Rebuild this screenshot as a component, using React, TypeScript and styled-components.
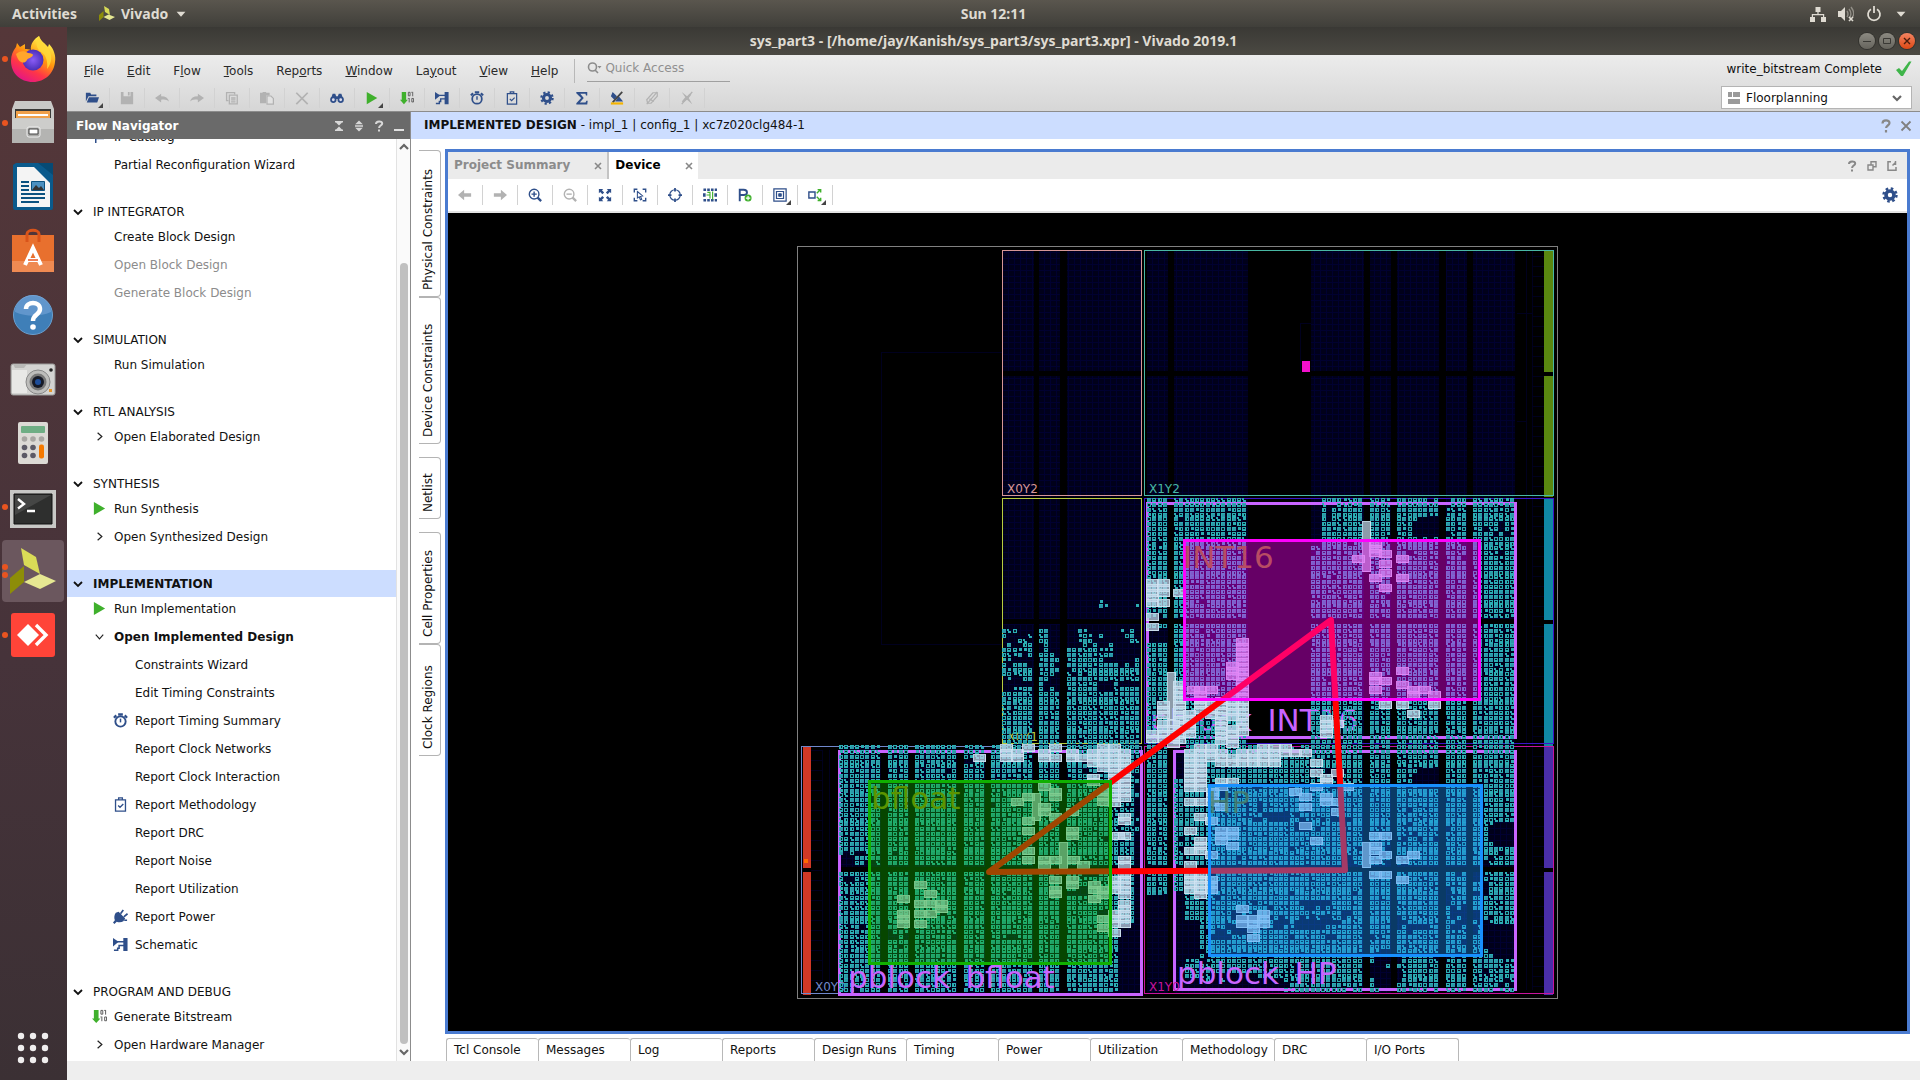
import React from "react";
import styled, { createGlobalStyle, css } from "styled-components";

const NAVY = "#2f4f8a";
const GREY = "#b2b2b2";
const GREEN = "#3fb02c";

const Global = createGlobalStyle`
  *, *::before, *::after { box-sizing: border-box; }
  body {
    margin: 0;
    font-family: "DejaVu Sans", sans-serif;
    font-size: 12px;
    line-height: 16px;
    color: #111;
    background: #eee;
  }
  button, input, select { font: inherit; color: inherit; }
  button { border: 0; padding: 0; background: none; cursor: default; }
  svg { display: block; flex: none; }
`;

/* ---------- shell ---------- */

const Desktop = styled.div`
  height: 100vh;
  display: flex;
  flex-direction: column;
  overflow: hidden;
`;

const TopBar = styled.header`
  flex: none;
  height: 27px;
  padding: 0 12px;
  display: grid;
  grid-template-columns: 67px 1fr auto 1fr;
  align-items: center;
  background: linear-gradient(#5a564e, #403f3a);
  color: #dfdbd2;
  font-family: "Noto Sans", sans-serif;
  font-size: 14px;
  font-weight: 700;
`;

const TopGroup = styled.div<{ $end?: boolean; $gap: number }>`
  display: flex;
  align-items: center;
  grid-column: ${(p) => (p.$end ? "4" : "1 / 3")};
  justify-content: ${(p) => (p.$end ? "flex-end" : "flex-start")};
  gap: ${(p) => p.$gap}px;
`;

const TopButton = styled.button`
  display: flex;
  align-items: center;
  gap: 6px;
  font-weight: 700;
`;

const Below = styled.div`
  flex: 1;
  min-height: 0;
  display: flex;
`;

const Dock = styled.nav`
  width: 67px;
  flex: none;
  display: flex;
  flex-direction: column;
  background: linear-gradient(#553739, #46333a 60%, #3b3034);
`;

const DockItem = styled.button<{ $last?: boolean }>`
  height: 64px;
  padding-left: 2px;
  display: flex;
  align-items: center;
  ${(p) => p.$last && css`margin-top: auto;`}
`;

const DockTile = styled.span<{ $active?: boolean }>`
  width: 62px;
  height: 62px;
  border-radius: 4px;
  display: grid;
  grid-template-columns: 6px 50px;
  align-items: center;
  background: ${(p) => (p.$active ? "#6b575e" : "transparent")};
`;

const Dots = styled.span`
  display: flex;
  flex-direction: column;
  gap: 2px;
`;

const Dot = styled.i`
  width: 6px;
  height: 6px;
  border-radius: 50%;
  background: #e95420;
`;

const Window = styled.div`
  flex: 1;
  min-width: 0;
  display: flex;
  flex-direction: column;
  background: #fff;
`;

const TitleBar = styled.div`
  flex: none;
  height: 28px;
  padding: 0 5px;
  display: grid;
  grid-template-columns: 1fr auto 1fr;
  align-items: center;
  background: linear-gradient(#3a3935, #4b4943);
  color: #dfdbd2;
`;

const Title = styled.h1`
  grid-column: 2;
  margin: 0;
  font-family: "Noto Sans", sans-serif;
  font-size: 14px;
  font-weight: 700;
  white-space: nowrap;
`;

const WindowButtons = styled.div`
  display: flex;
  justify-content: flex-end;
  gap: 4px;
`;

const RoundButton = styled.button<{ $close?: boolean }>`
  width: 16px;
  height: 16px;
  border-radius: 50%;
  display: grid;
  place-items: center;
  box-shadow: 0 0 0 1px #33322e;
  background: ${(p) => (p.$close ? "linear-gradient(#f48462, #dd4814)" : "linear-gradient(#8c8a82, #66645d)")};
`;

/* ---------- menu and toolbar ---------- */

const Chrome = styled.div`
  flex: none;
  display: flex;
  justify-content: space-between;
  height: 57px;
  padding-right: 8px;
  border-bottom: 1px solid #8c8c8c;
  background: linear-gradient(#ececec, #d6d6d6);
`;

const MenuRow = styled.div`
  display: flex;
  align-items: center;
  height: 31px;
  padding-left: 6px;
`;

const MenuButton = styled.button`
  padding: 0 12px 0 11px;
  color: #2a2a2a;
`;

const QuickAccess = styled.label`
  display: flex;
  align-items: center;
  width: 156px;
  height: 24px;
  margin-left: 4px;
  padding-left: 12px;
  border-left: 1px solid #b8b8b8;
`;

const QuickField = styled.span`
  display: flex;
  align-items: center;
  gap: 2px;
  width: 100%;
  height: 22px;
  padding-bottom: 4px;
  border-bottom: 1px solid #a0a0a0;
`;

const QuickInput = styled.input`
  width: 100%;
  min-width: 0;
  border: 0;
  padding: 0;
  outline: 0;
  background: transparent;
  &::placeholder { color: #909090; opacity: 1; }
`;

const ToolRow = styled.div`
  display: flex;
  align-items: center;
  height: 24px;
  padding-left: 8px;
`;

const ToolButton = styled.button<{ $line: string }>`
  position: relative;
  width: 35px;
  height: 20px;
  display: grid;
  place-items: center;
  border-right: 1px solid ${(p) => p.$line};
`;

const Corner = styled.i`
  position: absolute;
  right: 6px;
  bottom: 0;
  border-left: 5px solid transparent;
  border-bottom: 5px solid #444;
`;

const StatusArea = styled.div`
  display: flex;
  flex-direction: column;
  align-items: flex-end;
  padding-top: 5px;
  gap: 8px;
`;

const RunStatus = styled.div`
  display: flex;
  align-items: center;
  gap: 14px;
  height: 18px;
`;

const LayoutBox = styled.label`
  display: flex;
  align-items: center;
  width: 191px;
  height: 23px;
  padding: 0 6px 0 4px;
  gap: 4px;
  border: 1px solid #b4b4b4;
  background: #fff;
`;

const LayoutSelect = styled.select`
  flex: 1;
  appearance: none;
  border: 0;
  padding: 0;
  background: transparent;
  outline: 0;
`;

/* ---------- flow navigator ---------- */

const Work = styled.div`
  flex: 1;
  min-height: 0;
  display: flex;
`;

const Navigator = styled.aside`
  width: 344px;
  flex: none;
  display: flex;
  flex-direction: column;
  border-right: 1px solid #8c8c8c;
`;

const NavHeader = styled.div`
  flex: none;
  height: 27px;
  padding: 0 3px 0 9px;
  display: flex;
  align-items: center;
  gap: 4px;
  background: #6a6a6a;
  color: #fff;
`;

const NavTitle = styled.h2`
  flex: 1;
  margin: 0;
  font-size: 12px;
  font-weight: 700;
`;

const NavBody = styled.div`
  flex: 1;
  min-height: 0;
  display: flex;
`;

const NavTree = styled.div`
  flex: 1;
  min-width: 0;
  overflow: hidden;
  display: flex;
  flex-direction: column;
  justify-content: flex-end;
  gap: 22px;
  padding-bottom: 5px;
`;

const Section = styled.section`
  flex: none;
`;

const SectionHead = styled.button<{ $active?: boolean }>`
  width: 100%;
  height: 27px;
  margin-bottom: 1px;
  padding-left: 3px;
  display: flex;
  align-items: center;
  gap: 7px;
  background: ${(p) => (p.$active ? "#ccddff" : "transparent")};
  font-weight: ${(p) => (p.$active ? 700 : 400)};
`;

const ItemList = styled.div`
  display: flex;
  flex-direction: column;
  gap: 6px;
`;

const Item = styled.button<{ $deep?: boolean; $muted?: boolean; $bold?: boolean }>`
  height: 22px;
  padding-left: ${(p) => (p.$deep ? 46 : 25)}px;
  display: flex;
  align-items: center;
  gap: 6px;
  color: ${(p) => (p.$muted ? "#8c8c8c" : "#111")};
  font-weight: ${(p) => (p.$bold ? 700 : 400)};
  white-space: nowrap;
`;

const IconSlot = styled.span`
  width: 16px;
  height: 16px;
  flex: none;
`;

const ScrollBar = styled.div`
  width: 14px;
  flex: none;
  display: flex;
  flex-direction: column;
  align-items: center;
  padding: 0 0 1px;
  border-left: 1px solid #e2e2e2;
  background: #fafafa;
`;

const ScrollSpace = styled.div`
  flex: 108;
`;

const ScrollThumb = styled.div`
  flex: 780;
  width: 8px;
  border-radius: 4px;
  background: #c0c0c0;
`;

/* ---------- design area ---------- */

const Design = styled.main`
  flex: 1;
  min-width: 0;
  display: flex;
  flex-direction: column;
`;

const DesignHeader = styled.div`
  flex: none;
  height: 27px;
  padding: 0 6px 0 13px;
  display: flex;
  align-items: center;
  gap: 4px;
  background: #ccddff;
`;

const DesignTitle = styled.h2`
  flex: 1;
  margin: 0;
  padding-bottom: 2px;
  font-size: 12px;
  font-weight: 400;
`;

const DesignBody = styled.div`
  flex: 1;
  min-height: 0;
  display: flex;
  padding: 10px 10px 0 8px;
`;

const SideTabs = styled.div`
  width: 22px;
  flex: none;
  display: flex;
  flex-direction: column;
  gap: 13px;
  padding-top: 1px;
`;

const SideGroup = styled.div<{ $row: number }>`
  display: grid;
  grid-auto-rows: ${(p) => p.$row}px;
`;

const SideTab = styled.button`
  writing-mode: vertical-rl;
  transform: rotate(180deg);
  width: 22px;
  padding: 6px 0 0 3px;
  text-align: left;
  border: 1px solid #b4b4b4;
  border-right: 0;
  border-radius: 4px 0 0 4px;
  white-space: nowrap;
`;

const PanelColumn = styled.div`
  flex: 1;
  min-width: 0;
  display: flex;
  flex-direction: column;
  gap: 4px;
  padding-left: 4px;
`;

const Panel = styled.section`
  flex: 1;
  min-height: 0;
  display: flex;
  flex-direction: column;
  border: 3px solid #4a7bd0;
`;

const TabStrip = styled.div`
  flex: none;
  height: 27px;
  padding-right: 7px;
  display: flex;
  background: #ebebeb;
`;

const Tab = styled.button<{ $active?: boolean }>`
  display: flex;
  align-items: center;
  gap: 20px;
  padding: 0 1px 2px 6px;
  font-weight: 700;
  color: ${(p) => (p.$active ? "#000" : "#8c8c8c")};
  background: ${(p) => (p.$active ? "#fff" : "transparent")};
  border-right: ${(p) => (p.$active ? "0" : "2px solid #c4c4c4")};
`;

const StripTools = styled.div`
  margin-left: auto;
  display: flex;
  align-items: center;
  gap: 4px;
`;

const ViewTools = styled.div`
  flex: none;
  height: 34px;
  display: flex;
  align-items: center;
  padding-right: 9px;
  border-bottom: 2px solid #e4e4e4;
`;

const Push = styled.div`
  display: flex;
  margin-left: auto;
`;

const Canvas = styled.div`
  flex: 1;
  min-height: 0;
  background: #000;
  svg { width: 100%; height: 100%; }
`;

const BottomTabs = styled.div`
  flex: none;
  display: flex;
  height: 23px;
  padding-left: 1px;
`;

const BottomTab = styled.button`
  width: 92px;
  padding-left: 7px;
  text-align: left;
  white-space: nowrap;
  border: 1px solid #b8b8b8;
  border-width: 1px 0 0 1px;
  border-radius: 3px 3px 0 0;
  &:last-child { width: 93px; border-right-width: 1px; }
`;

const StatusBar = styled.footer`
  flex: none;
  height: 19px;
  background: #eee;
`;

/* ---------- icons ---------- */

const icons: Record<string, React.ReactNode> = {
  open: <path fill={NAVY} d="M1 2h5l1 2h6v2H4L1 12zM4.500 7H16l-2 6H2z" />,
  save: <path fill={GREY} d="M1 1h3v5h8V1h3v14H1zM9 1h2v4H9z" />,
  undo: <path fill={GREY} d="M7 3v3c5 0 8 2 9 6-2-2-5-3-9-2v3L0 8z" />,
  redo: <path fill={GREY} d="M9 3v3C4 6 1 8 0 12c2-2 5-3 9-2v3l7-5z" />,
  copy: <g fill="none" stroke={GREY} strokeWidth="1.500"><path d="M4 11H1.800V1.800H11V4" /><path d="M5 4.800h9v10H5zM7 8h5M7 10.200h5M7 12.400h5" /></g>,
  paste: <g><path fill={GREY} d="M0 2h3V1h4v1h4v3H7v9H0z" /><path fill="#e2e2e2" stroke={GREY} strokeWidth="1.400" d="M8 5.700h4.500l2.800 2.800v6.500H8z" /></g>,
  cross: <path stroke={GREY} strokeWidth="2" d="M1.500 2l13 13M14.500 2l-13 13" />,
  find: <g fill={NAVY}><circle cx="3.800" cy="10" r="3.600" /><circle cx="12.200" cy="10" r="3.600" /><path d="M3 3h3l1 3h2l1-3h3l2 6H1z" /><circle cx="3.800" cy="10" r="1.600" fill="#dde" /><circle cx="12.200" cy="10" r="1.600" fill="#dde" /></g>,
  play: <path fill={GREEN} d="M2 1l12 7-12 7z" />,
  bits: <g><path fill={GREEN} d="M2 1h5v9h2l-4.500 5L0 10h2z" /><path fill="none" stroke="#555" d="M9.500 1.500h2v4h-2zM14.500 1v5M13 1.500h1M10.500 8v5M9 8.500h1M13.500 8.500h2v4h-2z" /></g>,
  schematic: <g><path fill={NAVY} d="M0 1l6 4v0l-6 5zM11 1h4.500v14H11z" /><path fill="none" stroke={NAVY} strokeWidth="1.600" d="M4 5h8M12 9H6.500v3H5v2.200H1" /></g>,
  clock: <g fill="none" stroke={NAVY}><circle cx="8" cy="9" r="5.500" strokeWidth="2" /><path strokeWidth="2.400" d="M5.500 1.500h5M1 5l2.500-2.500M15 5l-2.500-2.500" /><path strokeWidth="1.600" d="M8 6v4" /></g>,
  clip: <g fill="none" stroke={NAVY} strokeWidth="1.400"><path d="M2.700 3h10.600v12H2.700zM6 3V1h4v2M5.500 9l2 2 3.500-3.500" /></g>,
  gear: <g fill="none" stroke={NAVY}><circle cx="8" cy="8" r="4" strokeWidth="3.600" /><circle cx="8" cy="8" r="6.500" strokeWidth="2.400" strokeDasharray="2.550 2.550" /></g>,
  sigma: <path fill={NAVY} d="M1.500 1h12.500v4h-1.500L12 3H6l4 5-4.500 5.200H12l1-2.200h1.500L14 15.500H1.500v-1.500L7 8 1.500 2.500z" />,
  mark: <g><path fill={NAVY} d="M3 1l5 5-3 4-4-4zM10 6l5 6H6z" /><path stroke="#444" strokeWidth="2" d="M14 1L3 13" /><path fill="#f4b400" d="M1 13h14v2.500H1z" /></g>,
  unlink: <g fill="none" stroke={GREY} strokeWidth="1.400"><path d="M2 10l7-8h5v4l-7 8H3z" /><path d="M14 1L2 15M5 9l5 3" /></g>,
  unmark: <g><path fill={GREY} d="M2 1l6 5 3-3 2 1-3 4 4 7-6-5-4 3-2-1 4-5z" /><path stroke={GREY} strokeWidth="1.600" d="M14 1L2 15" /></g>,
  plug: <g><path fill={NAVY} d="M3 4l3-1 7 7-2 3c-2 1.500-5 1.500-7 .5L1.500 16 0 14.500 2 12C.8 9 1.500 6 3 4z" /><path stroke={NAVY} strokeWidth="1.800" d="M8 5l3-4M11.500 8.500L15.500 5M12 12h3" /></g>,
  catalog: <path fill="none" stroke={NAVY} strokeWidth="1.600" d="M4 1v14M4 4h8v6H4" />,
  left: <path fill={GREY} d="M7 2v4h8v4H7v4L0 8z" />,
  right: <path fill={GREY} d="M9 2v4H1v4h8v4l7-6z" />,
  zoomin: <g fill="none" stroke={NAVY}><circle cx="7" cy="7" r="5.500" strokeWidth="1.600" /><path strokeWidth="1.600" d="M4 7h6M7 4v6" /><path strokeWidth="2.600" d="M11 11l4 4" /></g>,
  zoomout: <g fill="none" stroke={GREY}><circle cx="7" cy="7" r="5.500" strokeWidth="1.600" /><path strokeWidth="1.600" d="M4 7h6" /><path strokeWidth="2.600" d="M11 11l4 4" /></g>,
  fit: <path fill={NAVY} d="M1 1h5L4.500 2.500 7 5 5 7 2.500 4.500 1 6zM15 1v5l-1.500-1.500L11 7 9 5l2.500-2.500L10 1zM1 15v-5l1.500 1.500L5 9l2 2-2.500 2.500L6 15zM15 15h-5l1.500-1.500L9 11l2-2 2.500 2.500L15 10z" />,
  select: <g fill="none" stroke={NAVY} strokeWidth="1.600"><path d="M1.500 5V1.500H5M11 1.500h3.500V5M14.500 11v3.500H11M5 14.500H1.500V11" /><path strokeWidth="1.200" d="M5 4l6 5-2.500.5L10 13l-1.500.5L7 10l-2 1.500z" /></g>,
  target: <g fill="none" stroke={NAVY} strokeWidth="1.400"><circle cx="8" cy="8" r="6" /><path strokeWidth="2" d="M8 0v4M8 12v4M0 8h4M12 8h4" /></g>,
  route: <g><path stroke={NAVY} strokeWidth="3" strokeDasharray="3 1.300" d="M0.500 2h16M0.500 14h16" /><path fill={NAVY} d="M0 6h3v4H0zM13 6h3v4h-3z" /><path fill="none" stroke={GREEN} strokeWidth="1.300" d="M5 5h3v3H4M8 8v4M11 4v9" /></g>,
  pblock: <g><path fill="none" stroke={NAVY} strokeWidth="2.200" d="M2 15V2h4.500c5 0 5 6 0 6H2" /><circle cx="11.500" cy="11.500" r="4" fill={GREEN} /><path stroke="#fff" strokeWidth="1.300" d="M9 11.500h5M11.500 9v5" /></g>,
  layers: <g fill="none" stroke={NAVY}><path strokeWidth="1.400" d="M1 1h14v14H1zM4 4h8v8H4z" /><path fill={NAVY} d="M6.500 6.500h3v3h-3z" /></g>,
  expand: <g fill="none"><path stroke={NAVY} strokeWidth="1.600" d="M1 4.500h7v7H1z" /><path stroke={GREEN} strokeWidth="1.600" d="M10 6l4-4M11 1.800h3.500V5M10 10l4 4M11 14.200h3.500V11" /></g>,
  check: <path fill="#3fb54a" d="M0 9l3-2 3 3 7-9.500h2.500L7 15H5z" />,
  layout: <path fill="#9a9a9a" d="M2 2h4v5H2zM7 2h7v5H7zM2 9h12v5H2z" />,
  chevron: <path fill="none" stroke="#666" strokeWidth="2.200" d="M4 6l4 4 4-4" />,
  chevUp: <path fill="none" stroke="#666" strokeWidth="2.200" d="M4 10l4-4 4 4" />,
  sectionChevron: <path fill="none" stroke="#111" strokeWidth="1.800" d="M4 6l4 4 4-4" />,
  openChevron: <path fill="none" stroke="#222" strokeWidth="1.200" d="M4 6l4 4.500L12 6" />,
  closedChevron: <path fill="none" stroke="#222" strokeWidth="1.300" d="M6 4l4.500 4L6 12" />,
  search: <g fill="none" stroke="#8c8c8c" strokeWidth="1.600"><circle cx="5.500" cy="7" r="4" /><path d="M8 10l3 3" /><path fill="#8c8c8c" stroke="none" d="M10.500 6h4l-2 2.500z" /></g>,
  collapse: <g fill="#d8d8d8"><path d="M4 3h8v1.500H4zM8 7.500L5 4.500h6zM8 8.500l3 3H5zM4 11.500h8V13H4z" /></g>,
  updown: <path fill="#d8d8d8" d="M8 2.500l3.800 3.800H4.200zM8 13.500L4.200 9.700h7.600zM4 7.200h8v1.600H4z" />,
  helpLight: <path fill="none" stroke="#d8d8d8" strokeWidth="2" d="M5 6c0-3.300 6.200-3.300 6.200-.5 0 2-3.100 2.200-3.100 4.500M8 11.500v2" />,
  help: <path fill="none" stroke="#888" strokeWidth="2" d="M5 6c0-3.300 6.200-3.300 6.200-.5 0 2-3.100 2.200-3.100 4.500M8 11.500v2" />,
  helpLarge: <path fill="none" stroke="#888" strokeWidth="2.200" d="M4.500 5.500c0-4 7-4 7-.5 0 2.500-3.400 2.500-3.400 5M8 12v2.400" />,
  minimize: <path fill="#e0e0e0" d="M3 11h10v2H3z" />,
  close: <path stroke="#808080" strokeWidth="1.800" d="M3.500 3.500l9 9M12.500 3.500l-9 9" />,
  closeSmall: <path stroke="#888" strokeWidth="1.600" d="M5 6l6 6M11 6l-6 6" />,
  restore: <path fill="none" stroke="#888" strokeWidth="1.400" d="M7 7V3.700h5v5H9M4 7h5v5H4z" />,
  popout: <path fill="none" stroke="#888" strokeWidth="1.500" d="M7 3.700H4v8.500h8V9M8.500 7.500l3-3M11.500 3v4" />,
  network: <g fill="#dfdbd2"><path d="M5.500 1h5v5h-5zM0 11h5v5H0zM11 11h5v5h-5z" /><path d="M7.400 6h1.200v2h5.600v3H13V9.200H3V11H1.800V8h5.600z" /></g>,
  sound: <g><path fill="#dfdbd2" d="M0 5h3l4-4v14l-4-4H0z" /><path fill="none" stroke="#918e86" strokeWidth="1.400" d="M9 5c1.300 2 1.300 4 0 6M11 3c2.500 3 2.500 7 0 9M13 1c3 4 3 8 1.500 10" /><path stroke="#dfdbd2" strokeWidth="1.600" d="M11 11l4 4M15 11l-4 4" /></g>,
  power: <path fill="none" stroke="#dfdbd2" strokeWidth="1.800" d="M5 3.200a6 6 0 1 0 6 0M8 0v7" />,
  caret: <path fill="#dfdbd2" d="M3 5.500h10L8 11z" />,
  vivado: <g><path fill="#d9dc57" d="M5 0l5 3 1 6-5-3z" /><path fill="#8d8d08" d="M0 9l4.500-4v6L0 15z" /><path fill="#e6e892" d="M4.500 11l5-2.500L16 11l-5.500 3z" /></g>,
};

const Icon = ({ name, size = 16 }: { name: string; size?: number }) => (
  <svg width={size} height={size} viewBox="0 0 16 16" aria-hidden="true">{icons[name]}</svg>
);

const Art = ({ children }: { children: React.ReactNode }) => (
  <svg width="50" height="50" viewBox="0 0 50 50" aria-hidden="true">{children}</svg>
);

const dockArt: { name: string; dots: number; active?: boolean; art: React.ReactNode }[] = [
  {
    name: "Firefox", dots: 1,
    art: (
      <Art>
        <defs>
          <linearGradient id="ffBody" x1="0.800" y1="0.100" x2="0.300" y2="1">
            <stop offset="0" stopColor="#fff44f" /><stop offset="0.400" stopColor="#ff980e" /><stop offset="0.700" stopColor="#ff3647" /><stop offset="1" stopColor="#e31587" />
          </linearGradient>
          <radialGradient id="ffGlobe"><stop offset="0" stopColor="#8a5cf6" /><stop offset="1" stopColor="#4a2fb8" /></radialGradient>
        </defs>
        <path fill="url(#ffBody)" d="M31 2c2 6 6 7 9 11l1-3c5 5 7 12 6 18-1 11-10 20-22 20C12 48 3 39 3 27c0-6 2-10 5-14l1-4 3 4 5-3v5c2 0 4 0 6 1-1-6 3-11 8-14z" />
        <circle cx="25" cy="26" r="10.500" fill="url(#ffGlobe)" />
        <path fill="#ffa62b" d="M8 20c3-3 8-4 12-1 3 0 5 1 5 2-1 3-5 3-6 5-2 4-6 2-6 2-2-1-4-4-5-8z" />
        <path fill="#ffd93a" d="M31 2c2 6 6 8 9 12 5 7 4 15-1 21 1-8-1-14-6-17-5-4-6-10-2-16z" opacity="0.850" />
      </Art>
    ),
  },
  {
    name: "Files", dots: 1,
    art: (
      <Art>
        <path fill="#c9c9c7" d="M7 3h36l3 8v34H4V11z" /><path fill="#3a3a38" d="M7 11h36v9H7z" />
        <path fill="#f0a04a" d="M8 13h34v7H8z" /><path fill="#fff" d="M10 16h30v2H10z" />
        <path fill="#b4b4b2" d="M4 21h42v24H4z" /><path fill="#cdcdcb" d="M4 21h42v10H4z" />
        <rect x="19" y="29" width="13" height="10" rx="2" fill="#a8a8a6" stroke="#efefef" /><path fill="#fff" stroke="#444" d="M21 31h9v5h-9z" />
      </Art>
    ),
  },
  {
    name: "LibreOffice Writer", dots: 0,
    art: (
      <Art>
        <path fill="#0a5a8c" d="M8 1h37v45a2 2 0 0 1-2 2H7a2 2 0 0 1-2-2V3z" /><path fill="#f4f4f4" d="M9 5h17l16 16v24H9z" />
        <path fill="#0a5a8c" d="M28 1h17v16z" /><path fill="#064a74" d="M30 1h15v12z" />
        <path stroke="#0b5280" strokeWidth="2" d="M13 20h8M13 24h8M13 28h8M13 32h24M13 36h24M13 40h18" />
        <path fill="#4b90c0" stroke="#0b5280" d="M23.500 19.500h13v9h-13z" /><path fill="#333" d="M24 28l4-5 3 3 2-2 3 4z" />
      </Art>
    ),
  },
  {
    name: "Ubuntu Software", dots: 0,
    art: (
      <Art>
        <path fill="#e8702e" d="M4 9h42v37H4z" /><path fill="#ef8a52" d="M4 35h42v11H4z" />
        <path fill="none" stroke="#d9541a" strokeWidth="3" d="M19 16V8c0-5 12-5 12 0v8" />
        <path fill="none" stroke="#fff" strokeWidth="4" d="M17 39l8-17 8 17M18 34h14" /><path stroke="#e95420" strokeWidth="1.500" d="M20 34h10" />
      </Art>
    ),
  },
  {
    name: "Help", dots: 0,
    art: (
      <Art>
        <circle cx="25" cy="25" r="19.500" fill="#3f7fb8" stroke="#6aa0d0" /><path fill="#78a5d8" fillOpacity="0.600" d="M7 22a18 17 0 0 1 36 0c-12 5-24 5-36 0z" />
        <path fill="none" stroke="#fff" strokeWidth="4.500" d="M18 19c0-8 14-8 14 0 0 6-7 5-7 12" /><circle cx="25" cy="37" r="2.800" fill="#fff" />
      </Art>
    ),
  },
  {
    name: "Camera", dots: 0,
    art: (
      <Art>
        <rect x="3" y="10" width="44" height="31" rx="2" fill="#d4d4d2" stroke="#9c9c9a" /><path fill="#b8b8b6" d="M5 10h14l-3 4H7z" />
        <path fill="#e8e8e6" d="M4 16h15v23H4z" /><circle cx="30" cy="28" r="12" fill="#bdbdbb" stroke="#888" /><circle cx="30" cy="28" r="8.500" fill="#777" />
        <circle cx="30" cy="28" r="6" fill="#161a26" /><circle cx="30" cy="28" r="3" fill="#1d4d9a" /><circle cx="43" cy="16" r="1.800" fill="#222" /><path fill="#e8962a" d="M41 35h3v3h-3z" />
      </Art>
    ),
  },
  {
    name: "Calculator", dots: 0,
    art: (
      <Art>
        <rect x="10" y="4" width="30" height="42" rx="2" fill="#dcdad5" /><rect x="13" y="8" width="24" height="7" rx="1" fill="#6fae84" />
        <g fill="#a8a6a2"><circle cx="16.500" cy="21" r="2.800" /><circle cx="25" cy="21" r="2.800" /><circle cx="33.500" cy="21" r="2.800" /></g>
        <g fill="#5c5a66"><circle cx="16.500" cy="29.500" r="2.800" /><circle cx="25" cy="29.500" r="2.800" /><circle cx="16.500" cy="37.500" r="2.800" /><circle cx="25" cy="37.500" r="2.800" /></g>
        <rect x="31" y="26.500" width="5" height="14" rx="2" fill="#f57900" />
      </Art>
    ),
  },
  {
    name: "Terminal", dots: 1,
    art: (
      <Art>
        <path fill="#c8c8c6" d="M2 8h46v38H2z" /><path fill="#2e2f2e" stroke="#111" d="M6 12h38v30H6z" /><path fill="#454645" d="M7 13h36L7 33z" />
        <path fill="none" stroke="#fff" strokeWidth="2.400" d="M10 17l6 5-6 4.500M19 29h8" />
      </Art>
    ),
  },
  {
    name: "Vivado", dots: 2, active: true,
    art: (
      <Art>
        <path fill="#d9dc57" d="M13 2l15 9 4 17-16-9z" /><path fill="#8d8d08" d="M2 32l14-12v16L2 48z" /><path fill="#e6e892" d="M16 36l16-8 16 7-16 8z" />
      </Art>
    ),
  },
  {
    name: "AnyDesk", dots: 1,
    art: (
      <Art>
        <rect x="3" y="3" width="44" height="44" rx="3" fill="#ff4438" /><path fill="#fff" d="M20 14l11 11-11 11L9 25z" />
        <path fill="none" stroke="#fff" strokeWidth="3.400" d="M28 15l10 10-10 10" />
      </Art>
    ),
  },
];

/* ---------- device view ---------- */

const hash = (a: number, b: number) => {
  let h = (a * 374761393 + b * 668265263) | 0;
  h = Math.imul(h ^ (h >>> 13), 1274126177);
  return ((h ^ (h >>> 16)) >>> 0) / 4294967295;
};

const noise = (x: number, y: number) => {
  const ix = Math.floor(x);
  const iy = Math.floor(y);
  const fx = x - ix;
  const fy = y - iy;
  const top = hash(ix, iy) * (1 - fx) + hash(ix + 1, iy) * fx;
  const low = hash(ix, iy + 1) * (1 - fx) + hash(ix + 1, iy + 1) * fx;
  return top * (1 - fy) + low * fy;
};

// [first x, column count] of each slice column group
type Group = [number, number];
const west: Group[] = [[1002, 6], [1039, 4], [1067, 14]];
const southWest: Group[] = [[839, 8], [888, 4], [915, 8], [964, 4], [991, 8], [1039, 4], [1067, 14]];
const east: Group[] = [[1147, 4], [1174, 14], [1311, 10], [1370, 4], [1397, 8], [1446, 4], [1473, 8]];
const southEast: Group[] = [[1147, 4], [1174, 36], [1370, 4], [1397, 8], [1446, 4], [1473, 8]];

const PITCH_X = 5.25;
const PITCH_Y = 4.84;

const blob = (x: number, y: number, cx: number, cy: number, rx: number, ry: number) =>
  ((x - cx) / rx) ** 2 + ((y - cy) / ry) ** 2 < 1;

// share of empty slices around a point, 0 = packed, 1 = empty
const emptiness = (zone: string, x: number, y: number) => {
  if (zone === "X0Y1") {
    if (y < 590) return 1;
    if (y < 625) return x > 1095 ? 0.74 : 1;
    if (y < 645) return (x < 1050 || x > 1067) ? 0.5 : 0.75;
    if (y < 690) return x > 1050 && x < 1067 ? 0.65 : 0.36;
    return 0.2;
  }
  if (zone === "X0Y0") {
    if (x > 1130) return y < 830 ? 0.55 : 1;
    if (x > 1115) return y > 920 ? 0.9 : 0.3;
    if (blob(x, y, 850, 862, 22, 16)) return 0.45;
    return 0.17;
  }
  if (zone === "X1Y1") {
    if (x > 1300 && x < 1320 && y < 545) return 1;
    if (blob(x, y, 1424, 526, 16, 12)) return 0.8;
    if (x < 1170 && y > 628 && y < 640) return 0.9;
    return 0.15;
  }
  if (x < 1170) return y > 892 ? 1 : 0.05;
  if (x < 1184) return y < 775 || y > 890 ? 1 : 0.2;
  if (x < 1200 && y > 918 && y < 955) return 1;
  if (blob(x, y, 1306, 912, 42, 14)) return 0.55;
  if (blob(x, y, 1300, 818, 48, 10)) return 0.5;
  if (blob(x, y, 1465, 905, 26, 40)) return 0.5;
  if (blob(x, y, 1504, 832, 18, 14)) return 0.85;
  if (blob(x, y, 1504, 938, 24, 18)) return 0.9;
  if (blob(x, y, 1232, 925, 30, 16)) return 0.45;
  if (blob(x, y, 1385, 968, 16, 22)) return 0.8;
  if (blob(x, y, 1228, 983, 60, 10)) return 0.8;
  if (blob(x, y, 1424, 776, 14, 12)) return 0.8;
  return 0.21;
};

const buildSlices = () => {
  let body = "";
  let shade = "";
  let hole = "";
  const fill = (zone: string, groups: Group[], top: number, middle: number) => {
    groups.forEach(([start, count]) => {
      for (let c = 0; c < count; c++) {
        for (let r = 0; r < 50; r++) {
          const x = Math.round(start + c * PITCH_X);
          const y = Math.round(r < 25 ? top + r * PITCH_Y : middle + (r - 25) * PITCH_Y);
          const e = emptiness(zone, x, y);
          if (e >= 1 || noise(x / 19, y / 11) * 0.7 + hash(x, y) * 0.3 < e) continue;
          const k = hash(y, x);
          if (k < 0.1) {
            body += `M${x + 1} ${y}h3v3h-3z`;
          } else if (k < 0.2) {
            body += `M${x} ${y}h2v2h2v2h-3v-2h-1z`;
          } else {
            body += `M${x} ${y}h4v4h-4z`;
            if (k < 0.4) hole += `M${x + 1} ${y + 1}h2v1h-2z`;
            else if (k < 0.55) hole += `M${x + 2} ${y + 1}h1v2h-1z`;
            else if (k < 0.65) hole += `M${x + 1} ${y + 1}h2v2h-2z`;
            else shade += `M${x + 1} ${y + 1}h3v3h-3z`;
          }
        }
      }
    });
  };
  fill("X0Y1", west, 498, 624);
  fill("X1Y1", east, 498, 624);
  fill("X0Y0", southWest, 745, 872);
  fill("X1Y0", southEast, 745, 872);
  return { body, shade, hole };
};

const slices = buildSlices();

// Highlighted tiles are listed in thirds of a unit, relative to the corner of their block.
type Tile = [number, number, number?, number?];
const stack = (x: number, from: number, to: number): Tile[] => {
  const out: Tile[] = [];
  for (let y = from; y <= to; y += 15) out.push([x, y]);
  return out;
};

const int16Tiles: Tile[] = [
  ...stack(48, 297, 370), ...stack(82, 297, 330), [82, 358], [48, 399], [48, 429], [130, 326],
  [697, 124, 28, 154], [667, 225], [718, 181], [718, 196], [718, 208], [748, 210], [748, 239], [748, 268], [718, 282], [748, 312], [799, 225], [799, 282],
  [718, 576], [718, 590], [748, 590], [718, 618], [799, 561], [799, 604], [832, 618], [832, 633], [864, 618], [895, 633], [895, 662], [748, 662], [799, 662], [832, 691],
  ...stack(319, 475, 755), ...stack(289, 546, 580), [112, 576, 26, 145], ...stack(130, 604, 780), ...stack(80, 662, 700), ...stack(80, 720, 765), ...stack(112, 720, 780),
  [170, 618], [193, 618], [226, 618], ...stack(193, 633, 690), ...stack(226, 662, 700), ...stack(256, 650, 780), ...stack(289, 640, 700), ...stack(289, 735, 780), [48, 750], [48, 765],
  ...stack(160, 690, 755), ...stack(570, 706, 765), [602, 720],
];

const hpTiles: Tile[] = [
  ...stack(163, 57, 175), ...stack(193, 43, 175), ...stack(226, 43, 80), ...stack(256, 57, 100), ...stack(289, 72, 100), ...stack(319, 57, 100),
  ...stack(350, 57, 90), ...stack(382, 43, 90), ...stack(415, 43, 90), ...stack(447, 43, 72), [478, 57], [508, 57], [541, 87], [541, 117], [570, 131], [570, 145], [602, 117],
  [256, 145], [289, 145], [256, 158], [228, 174], [228, 189], [163, 204], [193, 204], [228, 204], [256, 219], [193, 248], [226, 262], [163, 291], [193, 320], [193, 335], [163, 350], [193, 350], [226, 363],
  [163, 393], ...stack(163, 422, 468), ...stack(193, 422, 482), ...stack(226, 437, 468), [256, 291], [289, 291], [256, 306], [289, 306], [256, 320], [289, 335],
  [541, 158], [478, 174], [508, 189], [508, 219], [570, 189], [570, 204], [602, 204], [602, 233], [634, 158], [508, 276], [541, 320],
  [718, 306], [748, 306], [697, 337, 28, 78], [718, 335], [718, 350], [718, 378], [748, 363], [799, 378], [832, 363], [718, 423], [748, 423], [799, 438],
  [319, 525], [319, 555], [319, 570], [350, 555], [350, 570], [350, 585], [350, 612], [382, 540], [382, 555], [382, 570],
];

const bfloatTiles: Tile[] = [
  [550, 72], [631, 43], [631, 57], [631, 72], [663, 57], [663, 72], [697, 43], [745, 57], [745, 72], [778, 43], [778, 72], [829, 57], [829, 72], [855, 72],
  ...stack(891, 57, 90), ...stack(922, 43, 105), ...stack(955, 43, 220), [891, 131], [891, 145], ...stack(985, 57, 205), [922, 174], [922, 189], [922, 204], [985, 248], [985, 262], [966, 306], [985, 306],
  [985, 378], [985, 393], [745, 160], [778, 174], [778, 189], [697, 189], [663, 204], [727, 189, 28, 83], [745, 219], [745, 233], [778, 248], [697, 262], [697, 291], [829, 233], [829, 291], [829, 306],
  [697, 350], [697, 378], [808, 336, 28, 80], [745, 378], [745, 393], [778, 378], [832, 378], [862, 393], [778, 437], [829, 437], [829, 452], [778, 467], [778, 480],
  [893, 452], [893, 467], [893, 495], ...stack(922, 467, 495), ...stack(985, 422, 482), ...stack(955, 437, 470), [985, 510], [985, 525], ...stack(955, 540, 570), ...stack(985, 540, 570), [955, 597],
  [922, 555], [922, 582], [322, 495], [373, 452], [403, 480], [373, 510], [403, 510], [436, 510], [436, 525], [373, 540], [403, 540], [322, 540], [322, 555], [322, 570], [373, 570],
];

const Tiles = ({ ox, oy, tiles }: { ox: number; oy: number; tiles: Tile[] }) => (
  <g fill="#c4d8ec" fillOpacity="0.720" stroke="#cfe4f2" strokeOpacity="0.900">
    {tiles.map(([x, y, w = 40, h = 24], i) => (
      <rect key={i} x={Math.round(ox + x / 3) + 0.5} y={Math.round(oy + y / 3) + 0.5} width={Math.round(w / 3) - 1} height={Math.round(h / 3) - 1} />
    ))}
  </g>
);

const fabricColumns = (groups: Group[], top: number) =>
  groups.flatMap(([x, n]) => [0, 126].map((dy) => (
    <rect key={`${x}-${top + dy}`} x={x} y={top + dy} width={Math.round(n * PITCH_X)} height="121" fill="url(#fabric)" />
  )));

// name, frame x, y, width, height, label inset, colour
const regions: [string, number, number, number, number, number, string][] = [
  ["X0Y2", 1002, 250, 139, 245, 5, "#d69696"],
  ["X1Y2", 1144, 250, 409, 245, 5, "#48b8a4"],
  ["X0Y1", 1002, 498, 139, 245, 5, "#b8cc40"],
  ["X1Y1", 1144, 498, 409, 245, 5, "#3c14c8"],
  ["X0Y0", 801, 746, 340, 247, 14, "#7088cc"],
  ["X1Y0", 1144, 746, 409, 247, 5, "#c8149c"],
];

const DeviceView = () => (
  <svg viewBox="448 213 1459 818" preserveAspectRatio="xMidYMid meet" role="img" aria-label="Device floorplan" fontFamily="DejaVu Sans, sans-serif">
    <defs>
      <pattern id="fabric" width="6" height="6" patternUnits="userSpaceOnUse">
        <path fill="#00001a" d="M0 0h6v6H0z" /><path fill="#000030" d="M0 0h6v1H0zM0 0h1v6H0z" />
      </pattern>
    </defs>
    <g shapeRendering="crispEdges">
      {fabricColumns(west, 250)}{fabricColumns(east, 250)}
      {fabricColumns(west, 498)}{fabricColumns(east, 498)}
      {fabricColumns(southWest, 746)}{fabricColumns(southEast, 746)}
      <g fill="none" stroke="#00001e">
        <path d="M1002 352.500H881.500V644.500H1002M1300.500 372V323.500H1311M1526.500 251V990M1532.500 251V990M1517 313.500H1532M1517 421.500H1526M822.500 750V990M829.500 750V990" />
        <path strokeDasharray="1 9" strokeWidth="12" d="M1538.500 256V990M816.500 750V990" />
      </g>
      <path fill="#5a8810" d="M1544 251h9v121h-9zM1544 376h9v121h-9z" />
      <path fill="#1088a4" d="M1544 498h9v122h-9zM1544 624h9v122h-9z" />
      <path fill="#4a2ea8" d="M1544 746h9v122h-9zM1544 872h9v123h-9z" />
      <path fill="#d03826" d="M803 747h8v121h-8zM803 872h8v123h-8z" />
      <path fill="#ff6a00" d="M804 859h4v4h-4z" />
      <path fill="#f410cc" d="M1302 361h8v11h-8z" />
      <path fill="none" stroke="#808080" d="M797.500 246.500h760v752h-760z" />
      {regions.map(([name, x, y, w, h, , color]) => (
        <rect key={name} x={x + 0.5} y={y + 0.5} width={w} height={h} fill="none" stroke={color} />
      ))}
      <g fill="none" stroke="#c864ff" strokeWidth="3">
        <path d="M1147.500 503.500h368v234h-368zM839.500 751.500h302v243h-302zM1174.500 751.500h341v238h-341z" />
      </g>
    </g>
    {regions.map(([name, x, y, , h, inset, color]) => (
      <text key={name} x={x + inset} y={y + h - 2} fontSize="12" fill={color}>{name}</text>
    ))}
    <text x="1150" y="731" fontSize="31" fill="#c864ff">pblock_INT16</text>
    <g shapeRendering="crispEdges">
      <path d={slices.body} fill="#2caeb4" />
      <path d={slices.shade} fill="#2c98a8" />
      <path d={slices.hole} fill="#04202e" />
      <Tiles ox={1130} oy={480} tiles={int16Tiles} />
      <Tiles ox={1130} oy={730} tiles={hpTiles} />
      <Tiles ox={790} oy={730} tiles={bfloatTiles} />
    </g>
    <text x="848" y="988" fontSize="31" fill="#c864ff">pblock_bfloat</text>
    <text x="1177" y="984" fontSize="31" fill="#c864ff">pblock_HP</text>
    <path d="M989 872L1331 620L1345 870Z" fill="none" stroke="#f00" strokeWidth="6" strokeLinejoin="round" />
    <g strokeWidth="3" fillOpacity="0.400" shapeRendering="crispEdges">
      <rect x="1184.500" y="540.500" width="295" height="159" fill="#f0f" stroke="#f0f" />
      <rect x="869.500" y="781.500" width="241" height="182" fill="#10b000" stroke="#10b000" />
      <rect x="1209.500" y="785.500" width="272" height="170" fill="#1890ff" stroke="#1890ff" />
    </g>
    <text x="1183" y="568" fontSize="31" fill="#b84c64">INT16</text>
    <text x="871" y="809" fontSize="31" fill="#5c9400">bfloat</text>
    <text x="1208" y="813" fontSize="31" fill="#4c8068" fillOpacity="0.800">HP</text>
  </svg>
);

/* ---------- page data ---------- */

const menus: [string, number][] = [["File", 0], ["Edit", 0], ["Flow", 1], ["Tools", 0], ["Reports", 3], ["Window", 0], ["Layout", 2], ["View", 0], ["Help", 0]];

const mainTools = ["open", "save", "undo", "redo", "copy", "paste", "cross", "find", "play", "bits", "schematic", "clock", "clip", "gear", "sigma", "mark", "unlink", "unmark"];
const viewTools = ["left", "right", "zoomin", "zoomout", "fit", "select", "target", "route", "pblock", "layers", "expand"];
const withMenu = ["open", "play", "layers", "expand"];

type NavItem = { text: string; icon?: string; deep?: boolean; muted?: boolean; bold?: boolean };
const sections: { title?: string; active?: boolean; items: NavItem[] }[] = [
  { items: [{ text: "IP Catalog", icon: "catalog" }, { text: "Partial Reconfiguration Wizard" }] },
  { title: "IP INTEGRATOR", items: [{ text: "Create Block Design" }, { text: "Open Block Design", muted: true }, { text: "Generate Block Design", muted: true }] },
  { title: "SIMULATION", items: [{ text: "Run Simulation" }] },
  { title: "RTL ANALYSIS", items: [{ text: "Open Elaborated Design", icon: "closedChevron" }] },
  { title: "SYNTHESIS", items: [{ text: "Run Synthesis", icon: "play" }, { text: "Open Synthesized Design", icon: "closedChevron" }] },
  {
    title: "IMPLEMENTATION", active: true,
    items: [
      { text: "Run Implementation", icon: "play" },
      { text: "Open Implemented Design", icon: "openChevron", bold: true },
      { text: "Constraints Wizard", deep: true },
      { text: "Edit Timing Constraints", deep: true },
      { text: "Report Timing Summary", deep: true, icon: "clock" },
      { text: "Report Clock Networks", deep: true },
      { text: "Report Clock Interaction", deep: true },
      { text: "Report Methodology", deep: true, icon: "clip" },
      { text: "Report DRC", deep: true },
      { text: "Report Noise", deep: true },
      { text: "Report Utilization", deep: true },
      { text: "Report Power", deep: true, icon: "plug" },
      { text: "Schematic", deep: true, icon: "schematic" },
    ],
  },
  { title: "PROGRAM AND DEBUG", items: [{ text: "Generate Bitstream", icon: "bits" }, { text: "Open Hardware Manager", icon: "closedChevron" }] },
];

const sideGroups = [
  { row: 147, tabs: ["Physical Constraints", "Device Constraints"] },
  { row: 62, tabs: ["Netlist"] },
  { row: 112, tabs: ["Cell Properties", "Clock Regions"] },
];
const bottomTabs = ["Tcl Console", "Messages", "Log", "Reports", "Design Runs", "Timing", "Power", "Utilization", "Methodology", "DRC", "I/O Ports"];

const Tool = ({ name, line }: { name: string; line: string }) => (
  <ToolButton $line={line} aria-label={name}>
    <Icon name={name} size={14} />
    {withMenu.includes(name) && <Corner />}
  </ToolButton>
);

const IconButton = ({ name }: { name: string }) => (
  <button aria-label={name}><Icon name={name} /></button>
);

export default function App() {
  return (
    <Desktop>
      <Global />
      <TopBar>
        <TopGroup $gap={22}>
          <TopButton>Activities</TopButton>
          <TopButton><Icon name="vivado" />Vivado<Icon name="caret" size={14} /></TopButton>
        </TopGroup>
        <TopButton>Sun 12:11</TopButton>
        <TopGroup $end $gap={12}>
          <IconButton name="network" />
          <IconButton name="sound" />
          <IconButton name="power" />
          <button aria-label="System menu"><Icon name="caret" size={14} /></button>
        </TopGroup>
      </TopBar>
      <Below>
        <Dock>
          {dockArt.map((d) => (
            <DockItem key={d.name} aria-label={d.name}>
              <DockTile $active={d.active}>
                <Dots>{Array.from({ length: d.dots }, (_, i) => <Dot key={i} />)}</Dots>
                {d.art}
              </DockTile>
            </DockItem>
          ))}
          <DockItem $last aria-label="Show Applications">
            <DockTile>
              <Dots />
              <Art>
                <g fill="#f0eeee">
                  {[13, 25, 37].flatMap((x) => [13, 25, 37].map((y) => <circle key={`${x}-${y}`} cx={x} cy={y} r="3.200" />))}
                </g>
              </Art>
            </DockTile>
          </DockItem>
        </Dock>
        <Window>
          <TitleBar>
            <Title>sys_part3 - [/home/jay/Kanish/sys_part3/sys_part3.xpr] - Vivado 2019.1</Title>
            <WindowButtons>
              <RoundButton aria-label="Minimize"><svg width="8" height="8"><path d="M0 4.500h8" stroke="#3a3935" /></svg></RoundButton>
              <RoundButton aria-label="Maximize"><svg width="8" height="8"><path d="M.5 1.500h7v5h-7z" fill="none" stroke="#3a3935" /></svg></RoundButton>
              <RoundButton aria-label="Close" $close><svg width="8" height="8"><path d="M1 1l6 6M7 1L1 7" stroke="#4a1c0c" strokeWidth="1.400" /></svg></RoundButton>
            </WindowButtons>
          </TitleBar>
          <Chrome>
            <div>
              <MenuRow>
                {menus.map(([m, k]) => (
                  <MenuButton key={m}>{m.slice(0, k)}<u>{m[k]}</u>{m.slice(k + 1)}</MenuButton>
                ))}
                <QuickAccess>
                  <QuickField>
                    <Icon name="search" />
                    <QuickInput placeholder="Quick Access" aria-label="Quick Access" />
                  </QuickField>
                </QuickAccess>
              </MenuRow>
              <ToolRow>{mainTools.map((t) => <Tool key={t} name={t} line="#d2d2d2" />)}</ToolRow>
            </div>
            <StatusArea>
              <RunStatus>write_bitstream Complete<Icon name="check" /></RunStatus>
              <LayoutBox>
                <Icon name="layout" />
                <LayoutSelect aria-label="Layout" defaultValue="Floorplanning"><option>Floorplanning</option></LayoutSelect>
                <Icon name="chevron" />
              </LayoutBox>
            </StatusArea>
          </Chrome>
          <Work>
            <Navigator>
              <NavHeader>
                <NavTitle>Flow Navigator</NavTitle>
                <IconButton name="collapse" /><IconButton name="updown" /><IconButton name="helpLight" /><IconButton name="minimize" />
              </NavHeader>
              <NavBody>
                <NavTree>
                  {sections.map((s, i) => (
                    <Section key={i}>
                      {s.title && <SectionHead $active={s.active}><Icon name="sectionChevron" />{s.title}</SectionHead>}
                      <ItemList>
                        {s.items.map((it) => (
                          <Item key={it.text} $deep={it.deep} $muted={it.muted} $bold={it.bold}>
                            <IconSlot>{it.icon && <Icon name={it.icon} size={15} />}</IconSlot>{it.text}
                          </Item>
                        ))}
                      </ItemList>
                    </Section>
                  ))}
                </NavTree>
                <ScrollBar>
                  <Icon name="chevUp" /><ScrollSpace /><ScrollThumb /><Icon name="chevron" />
                </ScrollBar>
              </NavBody>
            </Navigator>
            <Design>
              <DesignHeader>
                <DesignTitle><b>IMPLEMENTED DESIGN</b> - impl_1 | config_1 | xc7z020clg484-1</DesignTitle>
                <IconButton name="helpLarge" /><IconButton name="close" />
              </DesignHeader>
              <DesignBody>
                <SideTabs>
                  {sideGroups.map((g) => (
                    <SideGroup key={g.row} $row={g.row}>{g.tabs.map((t) => <SideTab key={t}>{t}</SideTab>)}</SideGroup>
                  ))}
                </SideTabs>
                <PanelColumn>
                  <Panel>
                    <TabStrip>
                      <Tab>Project Summary<Icon name="closeSmall" /></Tab>
                      <Tab $active>Device<Icon name="closeSmall" /></Tab>
                      <StripTools><IconButton name="help" /><IconButton name="restore" /><IconButton name="popout" /></StripTools>
                    </TabStrip>
                    <ViewTools>
                      {viewTools.map((t) => <Tool key={t} name={t} line="#d2d2d2" />)}
                      <Push><IconButton name="gear" /></Push>
                    </ViewTools>
                    <Canvas><DeviceView /></Canvas>
                  </Panel>
                  <BottomTabs>{bottomTabs.map((t) => <BottomTab key={t}>{t}</BottomTab>)}</BottomTabs>
                </PanelColumn>
              </DesignBody>
            </Design>
          </Work>
          <StatusBar />
        </Window>
      </Below>
    </Desktop>
  );
}
